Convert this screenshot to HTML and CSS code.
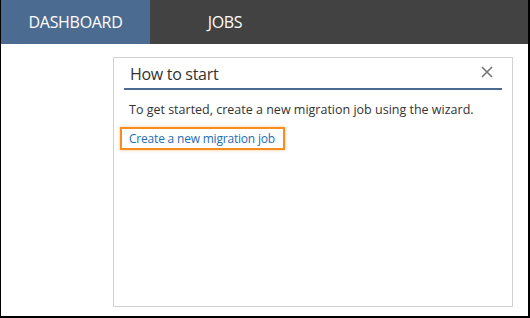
FILE: index.html
```html
<!DOCTYPE html>
<html>
<head>
<meta charset="utf-8">
<link rel="stylesheet" href="styles.css">
</head>
<body>
<div class="frame">
  <nav class="tabs">
    <div class="tab active">DASHBOARD</div>
    <div class="tab">JOBS</div>
  </nav>
  <main class="content">
    <section class="panel">
      <header class="panel-head">
        <h2 class="panel-title">How to start</h2>
        <svg class="close" width="12" height="12" viewBox="0 0 12 12"><path d="M1 1L11 11M11 1L1 11" stroke="#767676" stroke-width="1.6" fill="none"/></svg>
      </header>
      <div class="panel-body">
        <p class="intro">To get started, create a new migration job using the wizard.</p>
        <a class="create-link" href="#">Create a new migration job</a>
      </div>
    </section>
  </main>
</div>
</body>
</html>
```

FILE: styles.css
```css
html, body {
  margin: 0;
  padding: 0;
  background: #fff;
}
body {
  font-family: "Open Sans", "Noto Sans", sans-serif;
}
.frame {
  width: 530px;
  height: 318px;
  box-sizing: border-box;
  border-left: 1px solid #000;
  border-right: 2px solid #000;
  border-bottom: 2px solid #000;
  display: flex;
  flex-direction: column;
}
.tabs {
  display: flex;
  height: 44px;
  background: #424242;
}
.tab {
  width: 150px;
  display: flex;
  align-items: center;
  justify-content: center;
  color: #fff;
  font-size: 16px;
  letter-spacing: -0.3px;
}
.tab.active {
  width: 149px;
  background: #4c6b91;
}
.content {
  padding: 13px 0 0 112px;
}
.panel {
  width: 400px;
  height: 250px;
  box-sizing: border-box;
  border: 1px solid #d2d2d2;
  background: #fff;
}
.panel-head {
  margin: 0 10px 0 10px;
  height: 30px;
  border-bottom: 2px solid #4c6b91;
  display: flex;
  align-items: flex-end;
  justify-content: space-between;
  padding: 0 9px 0 6px;
}
.panel-title {
  margin: 0 0 3px 0;
  font-size: 16px;
  font-weight: normal;
  color: #333;
  letter-spacing: -0.3px;
}
.close {
  margin-bottom: 10px;
}
.panel-body {
  padding: 11px 15px;
}
.intro {
  margin: 0 0 8px 0;
  font-size: 12.5px;
  color: #333;
}
.create-link {
  display: inline-block;
  padding: 1px 8px 1px 7px;
  margin-left: -9px;
  border: 2px solid #f78d1e;
  box-shadow: 0 0 3px rgba(247,141,30,0.5);
  color: #1f6db3;
  text-decoration: none;
  font-size: 12px;
  letter-spacing: -0.2px;
}
```
